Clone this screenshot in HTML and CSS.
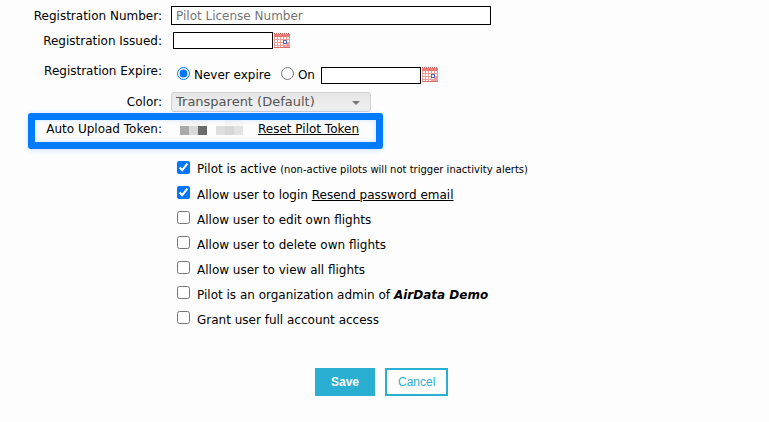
FILE: index.html
```
<!DOCTYPE html>
<html lang="en">
<head>
<meta charset="utf-8">
<title>Edit Pilot</title>
<link rel="stylesheet" href="styles.css">
</head>

<body>
<!-- Calendar icon shared by the date fields -->
<svg class="hidden">
    <symbol id="calendar" viewBox="0 0 16 16">
        <rect x="0" y="1" width="16" height="14" fill="#ee9d98"/>
        <path d="M0 0h1v1h-1zM2 0h1v1h-1zM4 0h1v1h-1zM6 0h1v1h-1zM8 0h1v1h-1zM10 0h1v1h-1zM12 0h1v1h-1zM14 0h1v1h-1z" fill="#b5605c"/>
        <rect x="0" y="1" width="16" height="3" fill="#ee7a74"/>
        <path d="M1 4h2v2h-2zM4 4h2v2h-2zM7 4h2v2h-2zM10 4h2v2h-2zM13 4h2v2h-2zM1 7h2v2h-2zM4 7h2v2h-2zM7 7h2v2h-2zM13 7h2v2h-2zM1 10h2v2h-2zM4 10h2v2h-2zM7 10h2v2h-2zM10 11h2v1h-2zM1 13h2v1h-2zM4 13h2v1h-2zM7 13h2v1h-2z" fill="#fff"/>
        <path d="M0 14h16v1h-16z" fill="#d5706b"/>
        <rect x="9" y="7" width="4" height="4" fill="#5a67c0"/>
        <rect x="10" y="8" width="2" height="2" fill="#fff"/>
    </symbol>
</svg>

<form class="pilot">
    <div class="row">
        <label class="name" for="number">Registration Number:</label>
        <input class="text" type="text" id="number" placeholder="Pilot License Number">
    </div>
    <div class="row">
        <label class="name" for="issued">Registration Issued:</label>
        <div class="field inset">
            <input class="date" type="text" id="issued">
            <button class="calendar" type="button" aria-label="Pick issue date"><svg width="16" height="16"><use href="#calendar"/></svg></button>
        </div>
    </div>
    <div class="row expire">
        <span class="name">Registration Expire:</span>
        <div class="field">
            <input class="radio" type="radio" name="expire" id="never" checked>
            <label class="choice" for="never">Never expire</label>
            <input class="radio" type="radio" name="expire" id="on">
            <label class="choice on" for="on">On</label>
            <input class="date" type="text" aria-label="Expiration date">
            <button class="calendar" type="button" aria-label="Pick expiration date"><svg width="16" height="16"><use href="#calendar"/></svg></button>
        </div>
    </div>
    <div class="row color">
        <label class="name" for="color">Color:</label>
        <div class="select">
            <select id="color"><option>Transparent (Default)</option></select>
        </div>
    </div>
    <div class="row token">
        <span class="name">Auto Upload Token:</span>
        <div class="field">
            <svg class="masked" width="64" height="18">
                <path d="M0 0h27v6h-27zM45 0h18v6h-18z" fill="#f7f7f7"/>
                <rect x="0" y="6" width="9" height="9" fill="#a9a9a9"/>
                <rect x="9" y="6" width="9" height="9" fill="#d9d9d9"/>
                <rect x="18" y="6" width="9" height="9" fill="#6b6b6b"/>
                <rect x="36" y="6" width="9" height="9" fill="#dedede"/>
                <rect x="45" y="6" width="9" height="9" fill="#d6d6d6"/>
                <rect x="54" y="6" width="9" height="9" fill="#e2e2e2"/>
            </svg>
            <a href="#">Reset Pilot Token</a>
        </div>
    </div>

    <!-- Permissions -->
    <div class="checks">
        <div class="check"><input type="checkbox" id="active" checked><label for="active">Pilot is active <small>(non-active pilots will not trigger inactivity alerts)</small></label></div>
        <div class="check"><input type="checkbox" id="login" checked><label for="login">Allow user to login</label>&nbsp;<a href="#">Resend password email</a></div>
        <div class="check"><input type="checkbox" id="edit"><label for="edit">Allow user to edit own flights</label></div>
        <div class="check"><input type="checkbox" id="delete"><label for="delete">Allow user to delete own flights</label></div>
        <div class="check"><input type="checkbox" id="view"><label for="view">Allow user to view all flights</label></div>
        <div class="check"><input type="checkbox" id="admin"><label for="admin">Pilot is an organization admin of <b><i>AirData Demo</i></b></label></div>
        <div class="check"><input type="checkbox" id="full"><label for="full">Grant user full account access</label></div>
    </div>

    <div class="buttons">
        <button class="btn btn-save" type="submit">Save</button>
        <button class="btn" type="button">Cancel</button>
    </div>
</form>
</body>
</html>
```

FILE: styles.css
```
body {
    font-family: Verdana, "DejaVu Sans", sans-serif;
    font-size: 12px;
    line-height: 16px;
    background: #fdfdfd;
    color: #000;
    margin: 0px;
    padding: 3px 0px;
}
input, select, button {
    box-sizing: border-box;
    font: inherit;
    margin: 0px;
}
a {
    color: #000;
    text-decoration: underline;
    text-underline-offset: 1px;
}
small {
    font-size: 10px;
}
.hidden {
    display: none;
}
.row {
    display: grid;
    grid-template-columns: 162px 1fr;
    column-gap: 9px;
    align-items: center;
    min-height: 25px;
}
.name {
    text-align: right;
}
.field {
    display: flex;
    align-items: center;
}
.inset {
    padding-left: 2px;
}
.text {
    width: 100%;
    max-width: 320px;
    height: 19px;
    padding: 0px 4px;
    border: 1px solid #000;
    background: #fff;
}
.text::placeholder {
    color: #757575;
}
.date {
    width: 100px;
    height: 17px;
    padding: 0px 3px;
    border: 1px solid #000;
    background: #fff;
}
.calendar {
    padding: 0px;
    margin-left: 1px;
    border: none;
    background: none;
}
.calendar svg {
    display: block;
}
.expire {
    min-height: 36px;
}
.expire .field {
    padding: 8px 0px 0px 6px;
}
.radio {
    width: 13px;
    height: 13px;
    margin-bottom: 4px;
    accent-color: #0075ff;
}
.choice {
    margin: 0px 10px 0px 4px;
}
.on {
    margin-right: 6px;
}
.color {
    min-height: 26px;
}
.select {
    position: relative;
    width: 200px;
}
.select select {
    display: block;
    width: 100%;
    height: 20px;
    padding: 0px 4px;
    border: 1px solid #d0d0d0;
    border-radius: 3px;
    background: linear-gradient(#e6e6e6, #f0f0f0);
    color: #555;
    font-size: 13px;
    appearance: none;
}
.select::after {
    content: "";
    position: absolute;
    top: 9px;
    right: 11px;
    border: 4px solid transparent;
    border-top: 4px solid #777;
    border-bottom: none;
}
.token {
    position: relative;
    min-height: 28px;
}
.token::before {
    content: "";
    position: absolute;
    top: -2px;
    left: 28px;
    width: 341px;
    height: 22px;
    border: 7px solid #007aff;
    border-radius: 3px;
    box-shadow: 0px 1px 5px #007aff33, inset 0px 0px 5px #007aff33;
    pointer-events: none;
}
.masked {
    margin: 0px 14px 0px 9px;
}
.checks {
    padding: 14px 0px 0px 177px;
}
.check {
    display: flex;
    align-items: center;
    min-height: 25px;
}
.check input {
    width: 13px;
    height: 13px;
    margin: 0px 7px 4px 0px;
    accent-color: #0075ff;
}
.buttons {
    display: flex;
    gap: 10px;
    padding: 36px 0px 20px 315px;
}
.btn {
    font-family: "Liberation Sans", Arial, sans-serif;
    font-size: 12px;
    min-width: 60px;
    height: 28px;
    padding: 0px 11px;
    border: 2px solid #2aafd3;
    background: #fff;
    color: #2aafd3;
}
.btn-save {
    background: #2aafd3;
    color: #fff;
    font-weight: bold;
}
```
